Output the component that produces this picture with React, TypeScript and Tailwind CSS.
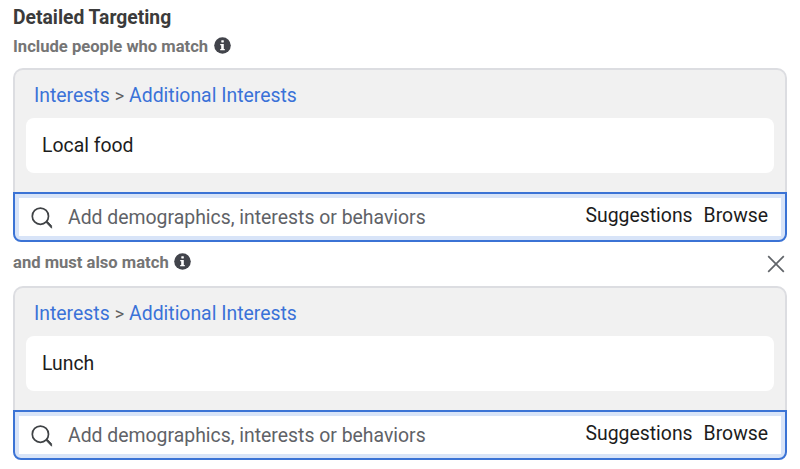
import { useState } from 'react';

interface InterestGroup {
  id: string;
  label: string;
  interest: string;
  removable: boolean;
}

const groups: InterestGroup[] = [
  { id: 'include', label: 'Include people who match', interest: 'Local food', removable: false },
  { id: 'narrow', label: 'and must also match', interest: 'Lunch', removable: true },
];

function InfoIcon() {
  return (
    <svg className="mb-[2px] h-[17px] w-[17px] shrink-0" viewBox="0 0 17 17" aria-hidden="true">
      <circle cx="8.5" cy="8.5" r="8.3" fill="#42444b" />
      <rect x="7.3" y="3.2" width="2.5" height="2.3" rx="0.4" fill="#fff" />
      <path d="M6.2 6.9h3.6v5h1v1.4H6.2v-1.4h1V8.3h-1z" fill="#fff" />
    </svg>
  );
}

function SearchIcon() {
  return (
    <svg className="mt-px h-[22px] w-[22px] shrink-0" viewBox="0 0 22 22" fill="none" aria-hidden="true">
      <circle cx="9.4" cy="9.2" r="8.1" stroke="#3f4245" strokeWidth="1.7" />
      <path d="M14.9 15.2l1.5-0.9 4.2 4.4v2.5z" fill="#3f4245" stroke="#3f4245" strokeWidth="0.8" />
    </svg>
  );
}

function CloseIcon() {
  return (
    <svg className="h-[18px] w-[18px]" viewBox="0 0 18 18" fill="none" aria-hidden="true">
      <path d="M1.2 1.2l15.6 15.6M16.8 1.2L1.2 16.8" stroke="#606469" strokeWidth="1.7" />
    </svg>
  );
}

function TargetingGroup({ interest }: { interest: string }) {
  const [query, setQuery] = useState('');

  return (
    <div className="h-[174px]">
      <div className="h-[124px] rounded-t-[10px] border-2 border-b-0 border-[#dcdde1] bg-[#f1f1f1] px-[11px] pt-[12px]">
        <div className="flex h-7 items-center gap-[5px] pl-2 text-[19.4px] text-[#3a72d8]">
          <a href="#interests">Interests</a>
          <span className="pb-[2px] text-[18px] text-[#606060]">&gt;</span>
          <a href="#additional">Additional Interests</a>
        </div>
        <div className="mt-2 flex h-[55px] items-center rounded-lg bg-white px-4 text-[19.4px] text-[#1c1c1c]">
          {interest}
        </div>
      </div>
      <div className="flex h-[50px] rounded-b-[8px] border-2 border-[#3b73d5] bg-[#d8e4f8] p-1">
        <div className="flex flex-1 items-center bg-white pr-[13px] pl-[12px]">
          <SearchIcon />
          <input
            type="text"
            placeholder="Add demographics, interests or behaviors"
            className="ml-[15px] min-w-0 flex-1 pt-[2px] text-[19.4px] text-[#1c1c1c] outline-none placeholder:text-[#606267]"
            value={query}
            onChange={(e) => setQuery(e.target.value)}
            aria-label="Add demographics, interests or behaviors"
          />
          <div className="flex gap-[11px] pb-[2px] text-[19.4px] text-[#1c1c1c]">
            <button type="button">Suggestions</button>
            <button type="button">Browse</button>
          </div>
        </div>
      </div>
    </div>
  );
}

export default function App() {
  return (
    <div className="h-[469px] overflow-hidden bg-white px-[13px] pt-[6px] font-['Roboto',sans-serif]">
      <h1 className="h-6 text-[19.3px] leading-6 font-bold text-[#3b3b3b]">Detailed Targeting</h1>
      {groups.map((group) => (
        <section key={group.id}>
          <div className={group.removable ? 'flex h-11 justify-between pt-[10px]' : 'flex h-[38px] pt-[6px]'}>
            <div className="flex h-5 items-center gap-[5.5px]">
              <h2 className="pt-[2px] text-[16.6px] leading-5 font-bold text-[#757575]">{group.label}</h2>
              <InfoIcon />
            </div>
            {group.removable && (
              <button type="button" className="mt-[3px] mr-[2px] h-[18px]" aria-label="Remove">
                <CloseIcon />
              </button>
            )}
          </div>
          <TargetingGroup interest={group.interest} />
        </section>
      ))}
    </div>
  );
}
